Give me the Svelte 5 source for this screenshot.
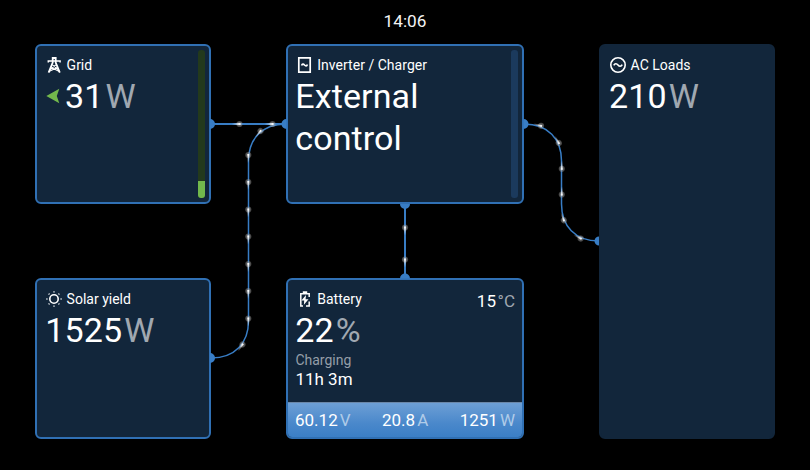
<script>
  const wires = [
    { d: 'M211 124H286', w: 2 },
    { d: 'M211 358C235 358 248.5 343 248.5 321V161C248.5 139 262 124 286 124', w: 1.5 },
    { d: 'M405 204V278', w: 2 },
    { d: 'M524 124C548 124 561.5 139 561.5 161V204C561.5 226 575 241 599 241', w: 1.5 }
  ];
  // x, y and travel angle of each energy pulse
  const pulses = [
    [239.5, 124, 90], [272.5, 124, 90], [260.5, 131, 40],
    [248.3, 155, 0], [248.3, 182, 0], [248.3, 209.5, 0], [248.3, 236.5, 0],
    [248.3, 264, 0], [248.3, 291, 0], [248.3, 318.5, 0], [242.5, 344.5, 35],
    [405, 227.5, 0], [405, 259.5, 0],
    [541, 125.8, 105], [558.8, 143, 150], [561.8, 168.8, 180], [561.8, 194.6, 180],
    [563.8, 220.3, 160], [580.7, 238.5, 118]
  ];
  const meters = [['60.12', 'V'], ['20.8', 'A'], ['1251', 'W']];
</script>

<main>
  <header>14:06</header>
  <div class="board">
    <div class="col">
      <section class="card">
        <div class="title">
          <svg width="16" height="18" viewBox="0 0 16 18" fill="none" stroke="#fff" stroke-width="1.6">
            <path d="M2.6 16.6 6.7 6.5V2H9.7V6.5L13.8 16.6" stroke-width="1.8" />
            <path d="M2.3 6.6V5H14.1V6.6" stroke-width="1.5" />
            <path d="M4.2 13.6 9.9 8.8M12.2 13.6 6.5 8.8M3 15.4 11.3 11.4M13.4 15.4 5.1 11.4" stroke-width="1.1" />
          </svg>
          <span>Grid</span>
        </div>
        <div class="value shift">
          <svg class="arrow" width="14" height="16" viewBox="0 0 14 16"><path d="M0.3 8 13.3 .7 10.8 8 13.3 15.3Z" fill="#72b84c" /></svg>31<i>W</i>
        </div>
        <div class="gauge green"><b></b></div>
      </section>
      <section class="card low">
        <div class="title">
          <svg width="16" height="18" viewBox="0 0 16 18" fill="none" stroke="#fff" stroke-width="1.6">
            <circle cx="8" cy="9" r="4.2" />
            <path d="M8 1.2V2.6M8 15.4V16.8M.2 9H1.6M14.4 9H15.8M2.6 3.6 3.5 4.5M12.5 13.5 13.4 14.4M2.6 14.4 3.5 13.5M12.5 4.5 13.4 3.6" stroke="#ccd2d8" />
          </svg>
          <span>Solar yield</span>
        </div>
        <div class="value">1525<i>W</i></div>
      </section>
    </div>
    <div class="col mid">
      <section class="card">
        <div class="title">
          <svg width="16" height="18" viewBox="0 0 16 18" fill="none" stroke="#fff">
            <path d="M2.8 1.8H14.2V16.2H2.8Z" stroke-width="1.7" />
            <path d="M5.6 9.6C6.2 7.8 7.4 7.8 8.5 9S10.8 10.2 11.4 8.4" stroke-width="1.7" />
          </svg>
          <span>Inverter / Charger</span>
        </div>
        <div class="value">External<br />control</div>
        <div class="gauge blue"></div>
      </section>
      <section class="card low">
        <div class="title">
          <svg width="16" height="18" viewBox="0 0 16 18" fill="none" stroke="#fff" stroke-width="1.5">
            <path d="M7 16H4.8V3.7H13.2V7M4.8 8V3.7M13.2 11.5V16H10M4.8 12.5V16" />
            <path d="M6.8 1.2H11.2V3.6H6.8Z" fill="#fff" stroke="none" />
            <path d="M10 5 5.4 10.5H8.2L7.9 14.8 12.5 9.2H9.6Z" fill="#fff" stroke="none" />
          </svg>
          <span>Battery</span>
          <div class="temp">15<i>°C</i></div>
        </div>
        <div class="value">22<i>%</i></div>
        <div class="state">Charging</div>
        <div class="time">11h 3m</div>
        <footer>
          {#each meters as [n, u]}
            <span>{n}<i>{u}</i></span>
          {/each}
        </footer>
      </section>
    </div>
    <section class="card plain">
      <div class="title">
        <svg width="18" height="18" viewBox="0 0 18 18" fill="none" stroke="#fff">
          <circle cx="9" cy="9" r="7.2" stroke-width="1.6" />
          <path d="M4.8 9.4C5.8 7.2 7.7 7.2 9 8.9S12.2 10.8 13.2 8.6" stroke-width="1.6" />
        </svg>
        <span>AC Loads</span>
      </div>
      <div class="value">210<i>W</i></div>
    </section>
  </div>

  <svg class="flow" width="810" height="470" viewBox="0 0 810 470">
    <defs>
      <radialGradient id="glow">
        <stop offset="0" stop-color="#fff" stop-opacity=".8" />
        <stop offset=".4" stop-color="#bbb" stop-opacity=".55" />
        <stop offset="1" stop-color="#999" stop-opacity=".4" />
      </radialGradient>
      <linearGradient id="tail" x1="0" y1="0" x2="0" y2="1">
        <stop offset="0" stop-color="#fff" />
        <stop offset="1" stop-color="#fff" stop-opacity="0" />
      </linearGradient>
    </defs>
    {#each wires as wire}
      <path d={wire.d} fill="none" stroke="#387dc5" stroke-width={wire.w} />
    {/each}
    <g fill="#387dc5">
      <path d="M210 119A5 5 0 0 1 210 129ZM210 353A5 5 0 0 1 210 363ZM286.5 119A5 5 0 0 0 286.5 129ZM523.5 119A5 5 0 0 1 523.5 129ZM599 236.5A4.5 4.5 0 0 0 599 245.5ZM400 204A5 5 0 0 0 410 204ZM400 278.5A5 5 0 0 1 410 278.5Z" />
    </g>
    {#each pulses as [x, y, a]}
      <g transform="translate({x} {y}) rotate({a})">
        <circle r="3.1" fill="url(#glow)" />
        <path d="M-.9 -1 .9 -1 .6 8 -.6 8Z" fill="url(#tail)" />
      </g>
    {/each}
  </svg>
</main>

<style>
  :global(body) { background: #000; }
  main {
    position: relative;
    width: 810px;
    height: 470px;
    overflow: hidden;
    background: #000;
    color: #fff;
    font-family: Roboto, sans-serif;
  }
  header { height: 44px; line-height: 43px; font-size: 17.2px; text-align: center; color: #f4f4f4; }
  .board {
    display: grid;
    grid-template-columns: 176px 238px 176px;
    column-gap: 75px;
    height: 395px;
    padding-left: 35px;
  }
  .col { display: flex; flex-direction: column; justify-content: space-between; }
  .card {
    position: relative;
    box-sizing: border-box;
    height: 160px;
    padding: 10px 8px 0 9px;
    border: 2px solid #3070b4;
    border-radius: 6px;
    background: #12263b;
    overflow: hidden;
  }
  .low { height: 161px; }
  .mid .card { padding-left: 8px; padding-right: 7px; }
  .plain { height: 395px; border-color: #12263b; padding-left: 8px; }
  .title { display: flex; align-items: center; height: 18px; font-size: 14px; gap: 4.6px; }
  .mid .title { gap: 5.2px; letter-spacing: 0.03px; }
  .plain .title { gap: 3.6px; }
  .title svg { flex: none; }
  .value { font-size: 34px; line-height: 42px; margin: 1px 0 0 -0.7px; white-space: nowrap; letter-spacing: 0.1px; }
  .plain .value { margin-left: 0; }
  i { font-style: normal; color: #a0a8b1; margin-left: 1.5px; }
  .value i { margin-left: 2px; }
  .shift { margin-left: 0; }
  .arrow { margin-right: 5px; vertical-align: 4px; }
  .gauge {
    position: absolute;
    top: 4px;
    right: 4.5px;
    width: 6.5px;
    height: 148px;
    border-radius: 3px;
    overflow: hidden;
  }
  .green { background: #23391c; }
  .green b { position: absolute; left: 0; right: 0; bottom: 0; height: 17px; background: #72b84c; }
  .blue { background: #1b3a5d; }
  .temp { margin-left: auto; font-size: 17px; position: relative; top: 2px; }
  .state { margin-left: -0.6px; font-size: 14px; line-height: 18px; color: #959ea8; }
  .time { margin-left: -0.6px; font-size: 17px; line-height: 21px; }
  footer {
    position: absolute;
    left: 0;
    right: 0;
    bottom: 0;
    height: 34px;
    display: flex;
    justify-content: space-between;
    align-items: center;
    padding: 0 7px;
    font-size: 17px;
    border-top: 1px solid #6b87a8;
    background: linear-gradient(#6d9fd5, #4a88cb 60%, #3b7fc6);
  }
  footer i { color: #afcbe8; margin-left: 2px; }
  .flow { position: absolute; left: 0; top: 0; pointer-events: none; }
</style>
